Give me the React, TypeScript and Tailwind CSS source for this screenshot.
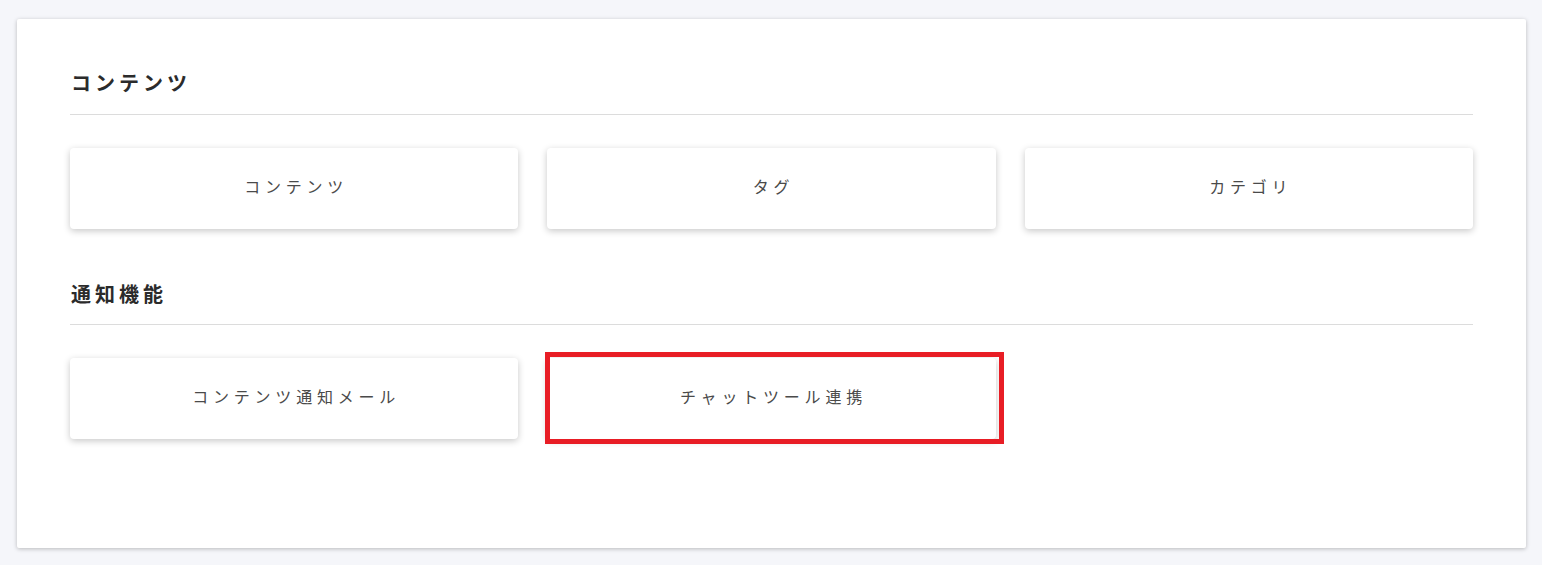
import React from "react";

const sections = [
  { title: "コンテンツ", items: ["コンテンツ", "タグ", "カテゴリ"] },
  { title: "通知機能", items: ["コンテンツ通知メール", "チャットツール連携"] },
];

const MenuCard = ({ label, marked }: { label: string; marked?: boolean }) => (
  <div className="relative">
    <button className="w-full h-[81px] pb-[3px] pl-[4px] bg-white rounded-[4px] shadow-[0_2px_7px_rgba(0,0,0,0.22)] text-[16px] tracking-[0.3em] text-[#4a4a4a] flex items-center justify-center">
      {label}
    </button>
    {marked && (
      <div className="absolute -left-[2px] -top-[6px] w-[459px] h-[92px] border-[5px] border-[#e81d25] pointer-events-none" />
    )}
  </div>
);

export default function App() {
  return (
    <div
      className="min-h-[565px] bg-[#f5f6fa] pt-[19px] px-[17px]"
      style={{ fontFamily: '"Noto Sans", "Noto Sans CJK JP", sans-serif' }}
    >
      <div className="w-[1509px] bg-white rounded-[2px] shadow-[0_1px_4px_rgba(0,0,0,0.25)] pt-[51px] pb-[109px] px-[53px]">
        {sections.map((section, i) => (
          <section key={section.title} className={i > 0 ? "mt-[52px]" : ""}>
            <h2
              className={`text-[20px] leading-[28px] font-bold tracking-[0.2em] text-[#2b2b2b] pl-[1px] border-b border-[#dcdcdc] ${
                i === 0 ? "pb-[16px]" : "pb-[15px]"
              }`}
            >
              {section.title}
            </h2>
            <div className="grid grid-cols-3 gap-[29px] mt-[33px]">
              {section.items.map((item) => (
                <MenuCard key={item} label={item} marked={item === "チャットツール連携"} />
              ))}
            </div>
          </section>
        ))}
      </div>
    </div>
  );
}
